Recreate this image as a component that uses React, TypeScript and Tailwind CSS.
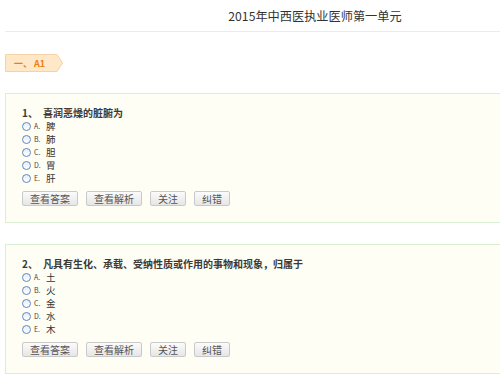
import React from "react";

const font = { fontFamily: '"Noto Sans CJK SC", "Liberation Sans", sans-serif' };

type Q = { no: string; text: string; options: [string, string][] };

const questions: Q[] = [
  {
    no: "1、",
    text: "喜润恶燥的脏腑为",
    options: [
      ["A.", "脾"],
      ["B.", "肺"],
      ["C.", "胆"],
      ["D.", "胃"],
      ["E.", "肝"],
    ],
  },
  {
    no: "2、",
    text: "凡具有生化、承载、受纳性质或作用的事物和现象，归属于",
    options: [
      ["A.", "土"],
      ["B.", "火"],
      ["C.", "金"],
      ["D.", "水"],
      ["E.", "木"],
    ],
  },
];

function Radio() {
  return (
    <span className="inline-block w-[9px] h-[9px] rounded-full border border-[#5f86c4] bg-gradient-to-b from-[#e6eef9] to-white shrink-0" />
  );
}

function Btn({ label }: { label: string }) {
  return (
    <button className="h-[15px] px-[7px] flex items-center justify-center border border-[#c9c9c9] rounded-[2px] bg-gradient-to-b from-[#fbfbfb] to-[#e6e6e6] text-[10px] leading-none text-[#555]">
      {label}
    </button>
  );
}

function Card({ q }: { q: Q }) {
  return (
    <div className="border border-[#d8efd4] bg-[#fefef5] pl-[16px] pt-[11px] pb-[16px]">
      <div className="flex items-center h-[15px] text-[10px] font-bold text-[#3a3a3a]">
        <span className="w-[21px]">{q.no}</span>
        <span>{q.text}</span>
      </div>
      <div className="flex flex-col">
        {q.options.map(([l, t]) => (
          <div key={l} className="flex items-center h-[13px]">
            <Radio />
            <span className="ml-[3px] w-[12px] text-[7px] leading-none text-[#444]">{l}</span>
            <span className="text-[9.5px] leading-none text-[#333]">{t}</span>
          </div>
        ))}
      </div>
      <div className="flex gap-[8px] mt-[6px]">
        <Btn label="查看答案" />
        <Btn label="查看解析" />
        <Btn label="关注" />
        <Btn label="纠错" />
      </div>
    </div>
  );
}

export default function App() {
  return (
    <div className="w-[500px] h-[375px] overflow-hidden bg-white" style={font}>
      <div className="ml-[5px] w-[620px]">
        <div className="h-[32px] flex items-center justify-center border-b border-[#ececec] text-[12.2px] text-[#333] pt-[2px]">
          2015年中西医执业医师第一单元
        </div>
        <div className="mt-[22px] relative w-[58px] h-[18px] flex items-center pl-[9px]">
          <svg className="absolute inset-0" width="58" height="18" viewBox="0 0 58 18">
            <polygon points="0.5,0.5 52,0.5 57.5,9 52,17.5 0.5,17.5" fill="#fee8c7" stroke="#f6d2a6" strokeWidth="1" />
          </svg>
          <span className="relative text-[9px] font-bold text-[#ee7d12] leading-none">一、&nbsp;A1</span>
        </div>
        <div className="mt-[21px] flex flex-col gap-[21px]">
          {questions.map((q) => (
            <Card key={q.no} q={q} />
          ))}
        </div>
      </div>
    </div>
  );
}
